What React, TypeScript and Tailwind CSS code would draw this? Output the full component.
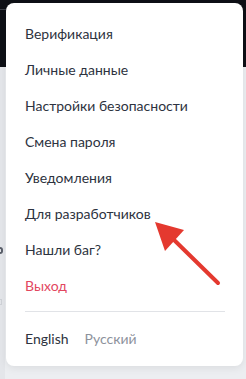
import React from "react";

const items = [
  "Верификация",
  "Личные данные",
  "Настройки безопасности",
  "Смена пароля",
  "Уведомления",
  "Для разработчиков",
  "Нашли баг?",
];

export default function App() {
  return (
    <div className="relative h-[379px] w-[246px] overflow-hidden bg-[#eceef1] font-['Lato',sans-serif]">
      {/* page behind the menu */}
      <div className="h-[67px] bg-[#0e1016]">
        <div className="h-[10px] w-[6px] border-b border-[#3a3d45]" />
      </div>
      <div className="flex h-[312px] w-[5px] flex-col bg-[#e4e6ea] pt-[180px]">
        <div className="h-[7px] w-[3px] rounded-r-sm border-2 border-l-0 border-[#5a5f6a]" />
        <div className="mt-[45px] h-[6px] w-[2px] border border-l-0 border-[#cfd2d7]" />
      </div>

      {/* dropdown */}
      <div className="absolute left-[6px] top-[3px] w-[237px] rounded-lg bg-white pb-2.5 pl-[19px] pr-[18px] pt-3 shadow-[0_2px_8px_rgba(0,0,0,0.08)]">
        <ul>
          {items.map((item) => (
            <li key={item} className="flex h-9 items-center text-[14px] text-[#2d3340]">
              {item}
            </li>
          ))}
          <li className="flex h-9 items-center text-[14px] text-[#e2475f]">Выход</li>
        </ul>
        <div className="mt-2 h-px bg-[#e1e3e7]" />
        <div className="mt-2 flex h-9 items-center gap-4 text-[14px]">
          <span className="text-[#2d3340]">English</span>
          <span className="text-[#8d929c]">Русский</span>
        </div>
      </div>

      {/* annotation arrow */}
      <svg className="absolute left-0 top-0" width="246" height="379" viewBox="0 0 246 379">
        <line x1="170" y1="236" x2="218" y2="283" stroke="#e4392f" strokeWidth="4" strokeLinecap="round" />
        <polygon points="155,222 184,230 165,251" fill="#e4392f" />
      </svg>
    </div>
  );
}
